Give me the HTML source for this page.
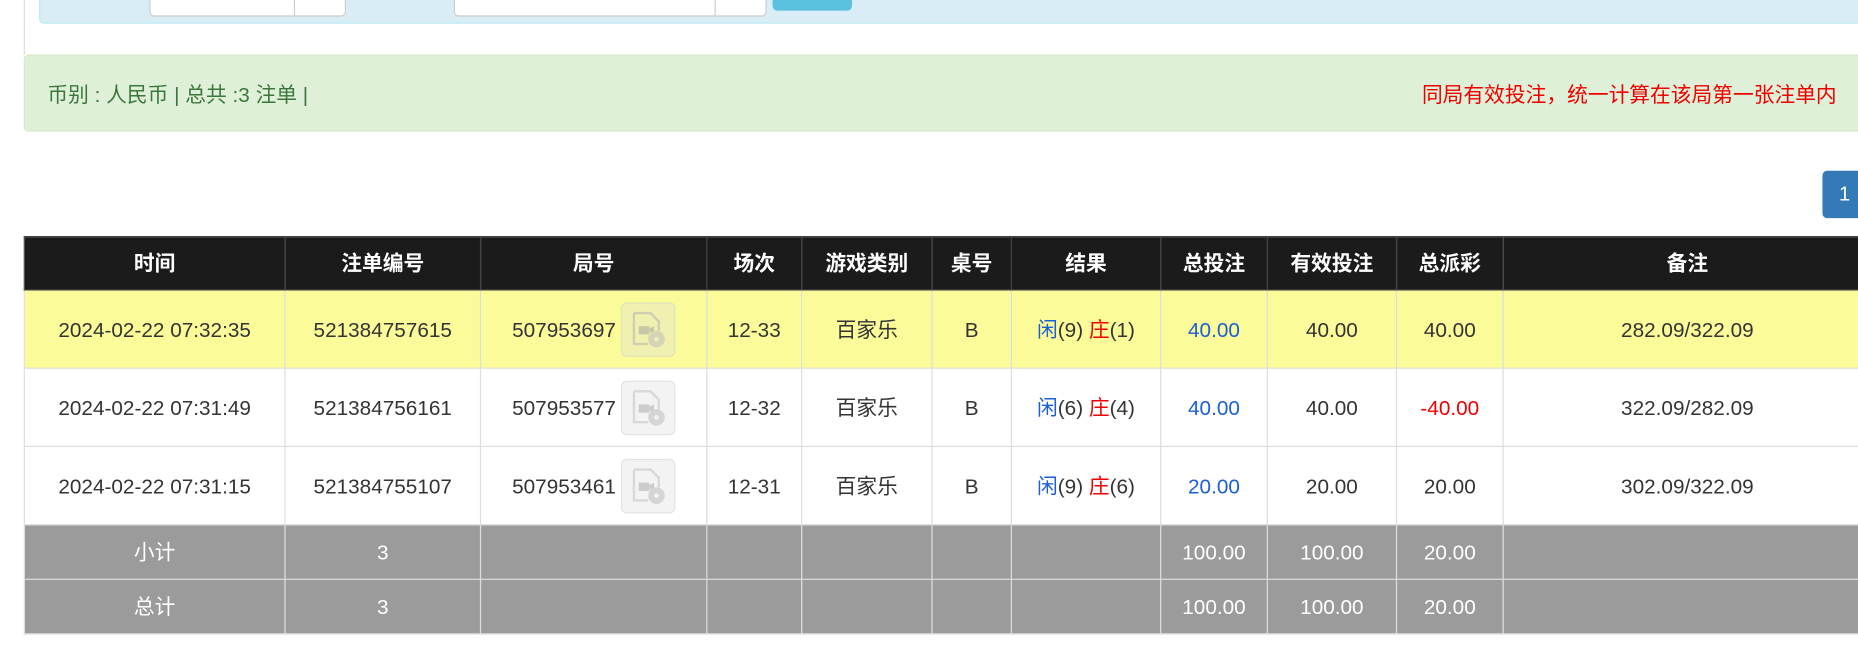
<!DOCTYPE html>
<html><head><meta charset="utf-8"><style>
html,body{margin:0;padding:0;background:#fff;overflow:hidden;width:1858px;height:651px}
#w{position:absolute;left:0;top:0;width:1568px;height:549px;transform:scale(1.18495,1.1858);transform-origin:0 0;font-family:"Liberation Sans","Noto Sans CJK SC",sans-serif;color:#333}
.abs{position:absolute}
table{position:absolute;left:20px;top:199px;border-collapse:collapse;width:1560px;font-size:17.5px}
td,th{border:1px solid #ddd;text-align:center;padding:0;vertical-align:middle;line-height:20px}
th{background:#1b1b1b;color:#fff;height:44px;border-color:#444;font-weight:bold}
tr.r td{height:65px}
tr.y td{background:#fbfb9a}
tr.g td{background:#9b9b9b;color:#fff;height:45px;border-color:#ddd}
.b{color:#1a5fd6}.rd{color:#e00}
.n{vertical-align:middle}
.ic{display:inline-block;vertical-align:middle;width:44px;height:44px;border-radius:5px;background:rgba(220,220,220,.35);border:1px solid rgba(200,200,200,.4);margin-left:4px;position:relative}
.ic svg{position:absolute;left:6px;top:6px}
</style></head><body><div id="w">
<div class="abs" style="left:20px;top:0;width:1px;height:46px;background:#ddd"></div>
<div class="abs" style="left:33px;top:-6px;width:1540px;height:24px;background:#d9edf7;border:1px solid #bce8f1;border-radius:4px"></div>
<div class="abs" style="left:126px;top:-4px;width:164px;height:16px;background:#fff;border:1px solid #ccc;border-radius:4px"></div>
<div class="abs" style="left:248px;top:-4px;width:1px;height:17px;background:#ccc"></div>
<div class="abs" style="left:383px;top:-4px;width:262px;height:16px;background:#fff;border:1px solid #ccc;border-radius:4px"></div>
<div class="abs" style="left:603px;top:-4px;width:1px;height:17px;background:#ccc"></div>
<div class="abs" style="left:652px;top:-6px;width:67px;height:15px;background:#5bc0de;border-radius:4px"></div>
<div class="abs" style="left:20px;top:46px;width:1560px;height:63px;background:#dff0d8;border:1px solid #d6e9c6;border-radius:4px"></div>
<div class="abs" style="left:40px;top:67px;font-size:17.5px;color:#3c763d">币别 : 人民币 | 总共 :3 注单 |</div>
<div class="abs" style="left:1200px;top:67px;font-size:17.5px;color:#e00;white-space:nowrap">同局有效投注，统一计算在该局第一张注单内</div>
<div class="abs" style="left:1538px;top:144px;width:40px;height:40px;background:#337ab7;border-radius:4px 0 0 4px;color:#fff;font-size:17px;line-height:40px;padding-left:14px;box-sizing:border-box">1</div>
<table>
<tr><th style="width:219px">时间</th><th style="width:164px">注单编号</th><th style="width:190px">局号</th><th style="width:79px">场次</th><th style="width:109px">游戏类别</th><th style="width:66px">桌号</th><th style="width:125px">结果</th><th style="width:89px">总投注</th><th style="width:108px">有效投注</th><th style="width:89px">总派彩</th><th>备注</th></tr>
<tr class="r y"><td>2024-02-22 07:32:35</td><td>521384757615</td><td><span class="n">507953697</span><span class="ic"><svg width="32" height="32" viewBox="0 0 32 32"><path d="M4 2h14l7 7v8M4 2v26h12" fill="none" stroke="#cfcfb0" stroke-width="2"/><rect x="8" y="13" width="9" height="7" fill="#c8c8a8"/><path d="M17 15l4-2v7l-4-2z" fill="#c8c8a8"/><circle cx="23" cy="24" r="7" fill="#d5d5b5"/><circle cx="23" cy="24" r="2" fill="#eeeec0"/></svg></span></td><td>12-33</td><td>百家乐</td><td>B</td><td><span class="b">闲</span>(9) <span class="rd">庄</span>(1)</td><td class="b">40.00</td><td>40.00</td><td>40.00</td><td>282.09/322.09</td></tr>
<tr class="r"><td>2024-02-22 07:31:49</td><td>521384756161</td><td><span class="n">507953577</span><span class="ic"><svg width="32" height="32" viewBox="0 0 32 32"><path d="M4 2h14l7 7v8M4 2v26h12" fill="none" stroke="#d8d8d8" stroke-width="2"/><rect x="8" y="13" width="9" height="7" fill="#ccc"/><path d="M17 15l4-2v7l-4-2z" fill="#ccc"/><circle cx="23" cy="24" r="7" fill="#d5d5d5"/><circle cx="23" cy="24" r="2" fill="#f2f2f2"/></svg></span></td><td>12-32</td><td>百家乐</td><td>B</td><td><span class="b">闲</span>(6) <span class="rd">庄</span>(4)</td><td class="b">40.00</td><td>40.00</td><td class="rd">-40.00</td><td>322.09/282.09</td></tr>
<tr class="r"><td>2024-02-22 07:31:15</td><td>521384755107</td><td><span class="n">507953461</span><span class="ic"><svg width="32" height="32" viewBox="0 0 32 32"><path d="M4 2h14l7 7v8M4 2v26h12" fill="none" stroke="#d8d8d8" stroke-width="2"/><rect x="8" y="13" width="9" height="7" fill="#ccc"/><path d="M17 15l4-2v7l-4-2z" fill="#ccc"/><circle cx="23" cy="24" r="7" fill="#d5d5d5"/><circle cx="23" cy="24" r="2" fill="#f2f2f2"/></svg></span></td><td>12-31</td><td>百家乐</td><td>B</td><td><span class="b">闲</span>(9) <span class="rd">庄</span>(6)</td><td class="b">20.00</td><td>20.00</td><td>20.00</td><td>302.09/322.09</td></tr>
<tr class="g"><td>小计</td><td>3</td><td></td><td></td><td></td><td></td><td></td><td>100.00</td><td>100.00</td><td>20.00</td><td></td></tr>
<tr class="g"><td>总计</td><td>3</td><td></td><td></td><td></td><td></td><td></td><td>100.00</td><td>100.00</td><td>20.00</td><td></td></tr>
</table>
</div></body></html>
